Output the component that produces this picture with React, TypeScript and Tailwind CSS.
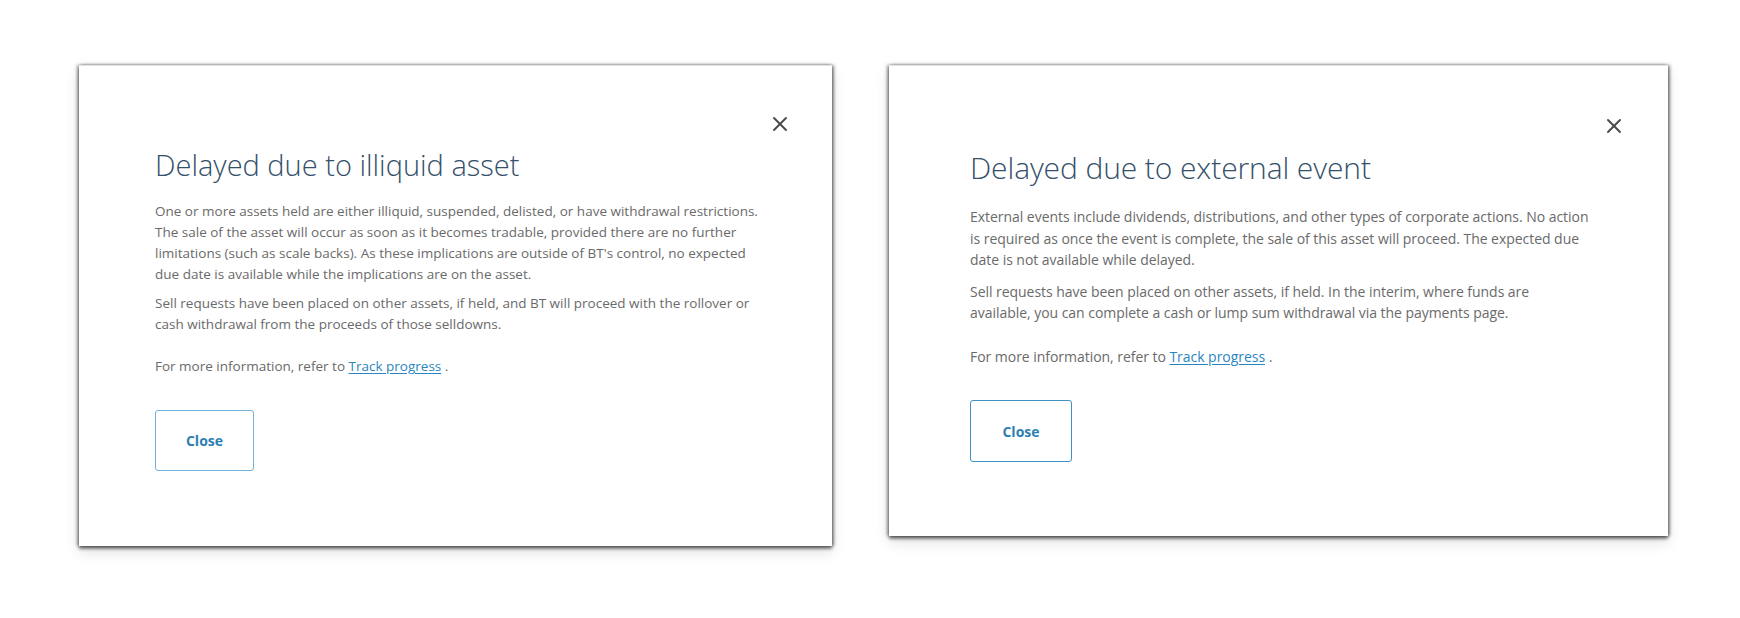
import { X } from 'lucide-react';

interface DialogProps {
  title: string;
  paragraphs: string[];
  boxClass: string;
  titleClass: string;
  bodyClass: string;
  p2Class: string;
  moreClass: string;
  buttonClass: string;
  closeClass: string;
}

const Dialog = ({
  title,
  paragraphs,
  boxClass,
  titleClass,
  bodyClass,
  p2Class,
  moreClass,
  buttonClass,
  closeClass,
}: DialogProps) => {
  return (
    <div
      className={`relative shrink-0 bg-white border-t border-t-[#e2e2e2] shadow-[-2px_0_3px_rgba(0,0,0,0.35),2px_0_3px_rgba(0,0,0,0.4),0_3px_3px_rgba(0,0,0,0.45),0_6px_14px_rgba(0,0,0,0.12)] ${boxClass}`}
    >
      {/* close icon */}
      <button className={`absolute text-[#4a4a4a] ${closeClass}`} aria-label="Close dialog">
        <X size={24} strokeWidth={1.9} />
      </button>

      <h2 className={`font-light text-[#34506a] ${titleClass}`}>{title}</h2>

      <div className={`text-[#6a6a6a] ${bodyClass}`}>
        <p>{paragraphs[0]}</p>
        <p className={p2Class}>{paragraphs[1]}</p>
        <p className={moreClass}>
          For more information, refer to{' '}
          <a href="#" className="text-[#2a86c0] underline underline-offset-2">
            Track progress
          </a>{' '}
          .
        </p>
      </div>

      <button
        className={`flex items-center justify-center rounded-[3px] border bg-white text-[14px] font-bold text-[#2c7fb2] ${buttonClass}`}
      >
        Close
      </button>
    </div>
  );
};

export default function App() {
  return (
    <div className="flex min-h-[618px] w-full items-start gap-[57px] bg-white pl-[79px] pt-[65px] font-['Open_Sans',sans-serif]">
      <Dialog
        title="Delayed due to illiquid asset"
        paragraphs={[
          "One or more assets held are either illiquid, suspended, delisted, or have withdrawal restrictions. The sale of the asset will occur as soon as it becomes tradable, provided there are no further limitations (such as scale backs). As these implications are outside of BT's control, no expected due date is available while the implications are on the asset.",
          'Sell requests have been placed on other assets, if held, and BT will proceed with the rollover or cash withdrawal from the proceeds of those selldowns.',
        ]}
        boxClass="w-[753px] h-[481px] pl-[76px] pt-[81px]"
        titleClass="text-[29px] leading-[36px]"
        bodyClass="mt-[18px] w-[615px] text-[13.5px] leading-[21px]"
        p2Class="mt-[8px]"
        moreClass="mt-[21px]"
        buttonClass="mt-[33px] w-[99px] h-[61px] border-[#72b2d8]"
        closeClass="right-[40px] top-[46px]"
      />
      <Dialog
        title="Delayed due to external event"
        paragraphs={[
          'External events include dividends, distributions, and other types of corporate actions. No action is required as once the event is complete, the sale of this asset will proceed. The expected due date is not available while delayed.',
          'Sell requests have been placed on other assets, if held. In the interim, where funds are available, you can complete a cash or lump sum withdrawal via the payments page.',
        ]}
        boxClass="w-[779px] h-[471px] pl-[81px] pt-[84px]"
        titleClass="text-[30px] leading-[36px] tracking-[-0.1px]"
        bodyClass="mt-[20px] w-[632px] text-[14px] leading-[21.5px] tracking-[-0.04px]"
        p2Class="mt-[10px] w-[600px]"
        moreClass="mt-[22px]"
        buttonClass="mt-[33px] w-[102px] h-[62px] border-[#3f93c4]"
        closeClass="right-[42px] top-[48px]"
      />
    </div>
  );
}
